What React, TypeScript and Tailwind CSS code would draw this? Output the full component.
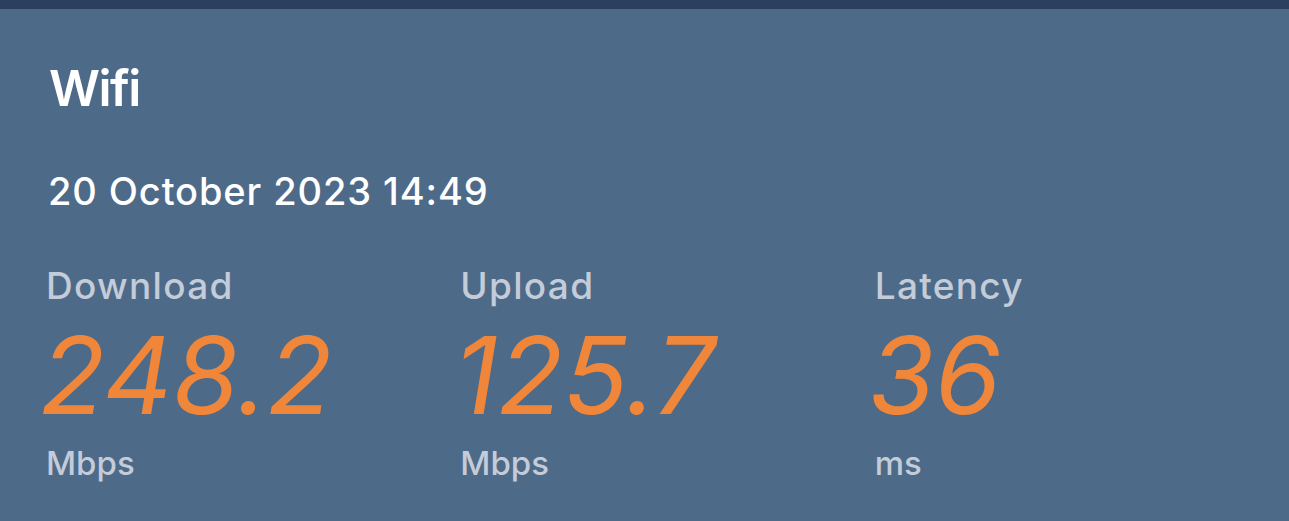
import React from "react";

const stats = [
  { label: "Download", value: "248.2", unit: "Mbps" },
  { label: "Upload", value: "125.7", unit: "Mbps" },
  { label: "Latency", value: "36", unit: "ms" },
];

export default function App() {
  return (
    <div className="w-[1289px] h-[521px] overflow-hidden bg-[#4e6a89] flex flex-col" style={{ fontFamily: "Inter, 'Noto Sans', sans-serif" }}>
      <div className="h-[9px] bg-[#2c3f5e] shrink-0" />
      <div className="pl-[48px] pt-[54px] flex flex-col">
        <div className="text-white text-[50px] font-semibold leading-none tracking-[-1.5px] ml-[1px]">Wifi</div>
        <div className="text-white text-[38px] font-medium leading-none mt-[59px] tracking-[0.9px]">20 October 2023 14:49</div>
        <div className="flex mt-[57px] -ml-[2px]">
          {stats.map((s) => (
            <div key={s.label} className="w-[415px] flex flex-col">
              <div className="text-[#c3ccd8] text-[37px] font-medium leading-none tracking-[1.3px]">{s.label}</div>
              <div className="text-[#f0863a] text-[107px] font-normal leading-none italic tracking-[0px] -ml-[6px] mt-[18px]">{s.value}</div>
              <div className="text-[#c3ccd8] text-[33px] font-medium leading-none mt-[18px]">{s.unit}</div>
            </div>
          ))}
        </div>
      </div>
    </div>
  );
}
